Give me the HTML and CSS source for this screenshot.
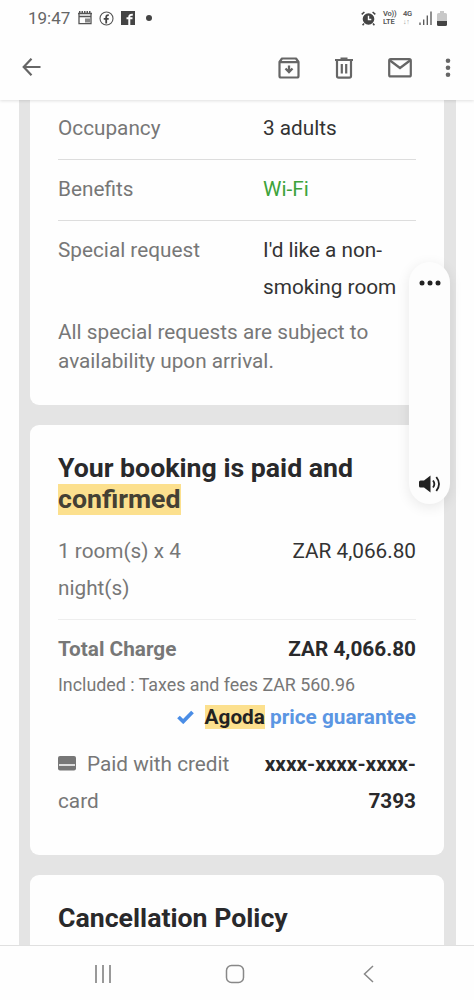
FILE: index.html
```html
<!DOCTYPE html>
<html lang="en">
<head>
<meta charset="utf-8">
<title>Booking confirmation</title>
<link rel="stylesheet" href="styles.css">
</head>
<body>
<div class="phone">
  <header class="top">
    <div class="status">
      <div class="status-left">
        <span class="time">19:47</span>
        <svg class="s-cal" width="14" height="14" viewBox="0 0 14 14"><path d="M1 3v9.600h12V3M0 2.500h14M1 5.500h12" fill="none" stroke="#555" stroke-width="1.300"/><path d="M1 1h12" stroke="#555" stroke-width="2" stroke-dasharray="1.500 1"/><path d="M7 7.500h5v4H7z" fill="#888"/></svg>
        <svg class="s-fb" width="15" height="15" viewBox="0 0 15 15"><circle cx="7.500" cy="7.500" r="6.500" fill="none" stroke="#555" stroke-width="1.100"/><path d="M7.200 12.500V6q0-2 2.600-1.800M4.700 7.800h5" fill="none" stroke="#444" stroke-width="1.800"/></svg>
        <svg class="s-fb2" width="14" height="14" viewBox="0 0 14 14"><path d="M0 0h14v14H0z" fill="#444"/><path d="M8.300 14V5.500q0-2 3.500-1.700M5.500 7.300h6" fill="none" stroke="#fff" stroke-width="2"/></svg>
        <span class="dot"></span>
      </div>
      <div class="status-right">
        <svg width="15" height="15" viewBox="0 0 15 15"><circle cx="7.500" cy="8" r="5.800" fill="#444"/><path d="M.700 3.400 3.400 1M14.300 3.400 11.600 1M3 12.500l-1.400 1.800M12 12.500l1.400 1.800" stroke="#444" stroke-width="1.500"/><path d="M7.500 4.700v3.800h2.800" fill="none" stroke="#fff" stroke-width="1.400"/></svg>
        <span class="tiny lte"><span>Vo))</span><span>LTE</span></span>
        <span class="tiny net"><span>4G</span><i>↓↑</i></span>
        <svg class="signal" width="13" height="14" viewBox="0 0 13 14"><path d="M1 14v-2.500M4.700 14V8.500M8.300 14V4.500M12 14V.500" stroke="#555" stroke-width="1.300"/></svg>
        <svg class="battery" width="10" height="15" viewBox="0 0 10 15"><path d="M3 0h4v2h1.500Q10 2 10 3.500V10H0V3.500Q0 2 1.500 2H3z" fill="#c8c8c8"/><path d="M0 10h10v3.500q0 1.500-1.500 1.500h-7Q0 15 0 13.500z" fill="#444"/></svg>
      </div>
    </div>
    <div class="toolbar">
      <svg class="back" width="20" height="20" viewBox="0 0 20 20"><path d="M18.500 9H2M9.500 .700 1.700 9l7.800 8.300" fill="none" stroke="#666" stroke-width="2.200"/></svg>
      <svg class="archive" width="22" height="22" viewBox="0 0 22 22"><path d="M1.500 5 4 1.500h14L20.500 5v14q0 1.500-1.500 1.500H3q-1.500 0-1.500-1.500zM1.500 5.200h19" fill="none" stroke="#666" stroke-width="2.200" stroke-linejoin="round"/><path d="M11 8.500v5.500M7.500 11.500l3.500 3.500 3.500-3.500" fill="none" stroke="#666" stroke-width="2.300"/></svg>
      <svg class="trash" width="20" height="22" viewBox="0 0 20 22"><path d="M1 3h18M6.500 1.700h7M3 3v16q0 1.700 1.700 1.700h10.600q1.700 0 1.700-1.700V3M7.800 7v9.500M12.200 7v9.500" fill="none" stroke="#666" stroke-width="2.200"/></svg>
      <svg class="mail" width="24" height="20" viewBox="0 0 24 20"><rect x="1.200" y="1.200" width="21.600" height="17.200" rx="1.500" fill="none" stroke="#666" stroke-width="2.200"/><path d="m2 2.500 10 7.500 10-7.500" fill="none" stroke="#666" stroke-width="2.200"/></svg>
      <svg class="more" width="6" height="20" viewBox="0 0 6 20"><g fill="#666"><circle cx="3" cy="2.700" r="2.300"/><circle cx="3" cy="9.700" r="2.300"/><circle cx="3" cy="16.700" r="2.300"/></g></svg>
    </div>
  </header>

  <main class="content">
    <div class="sheet">
      <section class="card details">
        <div class="row"><span>Occupancy</span><span class="value">3 adults</span></div>
        <div class="row"><span>Benefits</span><span class="value green">Wi-Fi</span></div>
        <div class="row last"><span>Special request</span><span class="value">I'd like a non-<br>smoking room</span></div>
        <p class="note">All special requests are subject to<br>availability upon arrival.</p>
      </section>

      <section class="card payment">
        <h2 class="title">Your booking is paid and<br><mark class="mark-title">confirmed</mark></h2>
        <div class="line rooms"><span>1 room(s) x 4<br>night(s)</span><span class="amount">ZAR 4,066.80</span></div>
        <div class="line total"><span>Total Charge</span><span class="amount">ZAR 4,066.80</span></div>
        <p class="included">Included : Taxes and fees ZAR 560.96</p>
        <div class="guarantee">
          <svg width="17" height="14" viewBox="0 0 17 14"><path d="m1.500 7 4.700 4.500L15.500 2" fill="none" stroke="#4a8de6" stroke-width="3.800"/></svg>
          <span><mark>Agoda</mark> price guarantee</span>
        </div>
        <div class="line card-pay">
          <span><svg class="card-icon" width="18" height="15" viewBox="0 0 18 15"><rect width="18" height="14.500" rx="2" fill="#777"/><path d="M1 9h16" stroke="#ddd" stroke-width="2"/></svg>Paid with credit<br>card</span>
          <span class="amount number">xxxx-xxxx-xxxx-<br>7393</span>
        </div>
      </section>

      <section class="card policy"><h2 class="title">Cancellation Policy</h2></section>
    </div>
  </main>

  <nav class="nav">
    <svg width="18" height="18" viewBox="0 0 18 18"><path d="M2 0v18M9 0v18M16 0v18" stroke="#888" stroke-width="1.700"/></svg>
    <svg class="home" width="20" height="20" viewBox="0 0 20 20"><rect x="1.500" y="1.500" width="17" height="17" rx="5" fill="none" stroke="#888" stroke-width="1.500"/></svg>
    <svg width="11" height="18" viewBox="0 0 11 18"><path d="M10 1 1.500 9 10 17" fill="none" stroke="#888" stroke-width="1.500"/></svg>
  </nav>

  <aside class="panel">
    <svg width="22" height="6" viewBox="0 0 22 6"><g fill="#222"><circle cx="3" cy="3" r="2.500"/><circle cx="11" cy="3" r="2.500"/><circle cx="19" cy="3" r="2.500"/></g></svg>
    <svg width="22" height="18" viewBox="0 0 22 18"><path d="M1.500 5.500H5L11.500.500v17L5 12.500H1.500Q0 12.500 0 11V7q0-1.500 1.500-1.500z" fill="#222"/><path d="M14 5.500q2.700 3.500 0 7M17.300 2q5.400 7 0 14" fill="none" stroke="#222" stroke-width="1.800"/></svg>
  </aside>
</div>
</body>
</html>
```
FILE: styles.css
```css
* { box-sizing: border-box; }
body { margin: 0; background: #fefefe; font-family: Roboto, "Liberation Sans", sans-serif; }
svg { display: block; flex: none; }
h2, p { margin: 0; }
.phone { position: relative; width: 474px; height: 1000px; display: flex; flex-direction: column; overflow: hidden; }

.top { height: 100px; flex: none; background: #fefefe; box-shadow: 0 1px 3px rgba(0,0,0,.12); z-index: 1; }
.status { height: 36px; display: flex; justify-content: space-between; padding: 0 27px 0 28px; }
.status-left, .status-right { display: flex; align-items: center; }
.time { font-size: 17px; color: #666; width: 43px; margin-right: 7px; white-space: nowrap; }
.s-cal, .s-fb { margin-right: 7px; }
.dot { width: 6px; height: 6px; border-radius: 50%; background: #444; margin-left: 11px; }
.tiny { display: flex; flex-direction: column; font-size: 7.500px; line-height: 8px; font-weight: 600; letter-spacing: -.2px; color: #555; white-space: nowrap; }
.lte { margin-left: 7px; width: 13px; }
.net { margin-left: 7px; width: 10px; }
.net i { font-style: normal; font-weight: 400; font-size: 7px; color: #999; }
.signal { margin-left: 6px; }
.battery { margin-left: 5px; }
.toolbar { display: flex; align-items: center; height: 64px; padding: 0 23px 0 22px; }
.archive { margin-left: 236px; }
.trash { margin-left: 34px; }
.mail { margin-left: 34px; }
.more { margin-left: 33px; }

.content { height: 845px; flex: none; overflow: hidden; padding: 0 18px 0 19px; background: #fefefe; }
.sheet { background: #e4e4e4; padding: 0 12px 0 11px; display: flex; flex-direction: column; gap: 20px; }
.card { background: #fefefe; border-radius: 9px; padding: 0 28px; }

.details { height: 305px; border-radius: 0 0 9px 9px; padding-top: 10px; font-size: 20.750px; line-height: 37px; color: #777; }
.row { display: grid; grid-template-columns: 205px 1fr; padding-bottom: 12px; border-bottom: 1px solid #ddd; margin-bottom: 11px; white-space: nowrap; }
.row.last { border: 0; margin: 0; padding: 0; }
.value { color: #333; }
.green { color: #3da33a; }
.note { line-height: 29.500px; margin-top: 11.500px; white-space: nowrap; }

.payment { height: 430px; padding-top: 28px; font-size: 20.750px; line-height: 37px; color: #777; }
.title { font-size: 26.700px; line-height: 31px; font-weight: 700; color: #29292b; white-space: nowrap; }
mark { background: #fce08e; color: #222; }
.mark-title { color: #444034; display: inline-block; }
.line { display: flex; justify-content: space-between; white-space: nowrap; }
.amount { color: #333; text-align: right; }
.rooms { margin-top: 18px; padding-bottom: 12px; border-bottom: 1px solid #eee; }
.total { margin-top: 11px; font-weight: 700; }
.total .amount, .number { color: #29292b; font-weight: 700; }
.included { font-size: 17.850px; line-height: 24px; margin-top: 5px; white-space: nowrap; }
.guarantee { display: flex; justify-content: flex-end; align-items: center; gap: 11px; height: 24px; margin-top: 8px; line-height: 24px; font-weight: 700; color: #5b96e3; white-space: nowrap; }
.card-pay { margin-top: 17px; }
.card-icon { display: inline-block; margin-right: 11px; }
.policy { height: 110px; padding-top: 27.500px; }

.nav { height: 55px; flex: none; border-top: 1px solid #e0e0e0; background: #fefefe; display: flex; align-items: center; padding: 2px 101px 0 94px; }
.home { margin: 0 118px 0 113px; }

/* floating media panel above the message */
.panel { position: absolute; left: 409px; top: 262px; width: 41px; height: 242px; border-radius: 20.500px; background: #fdfdfd; box-shadow: 0 3px 14px rgba(0,0,0,.09); display: flex; flex-direction: column; justify-content: space-between; align-items: center; padding: 18px 0 11px; z-index: 2; }
```
